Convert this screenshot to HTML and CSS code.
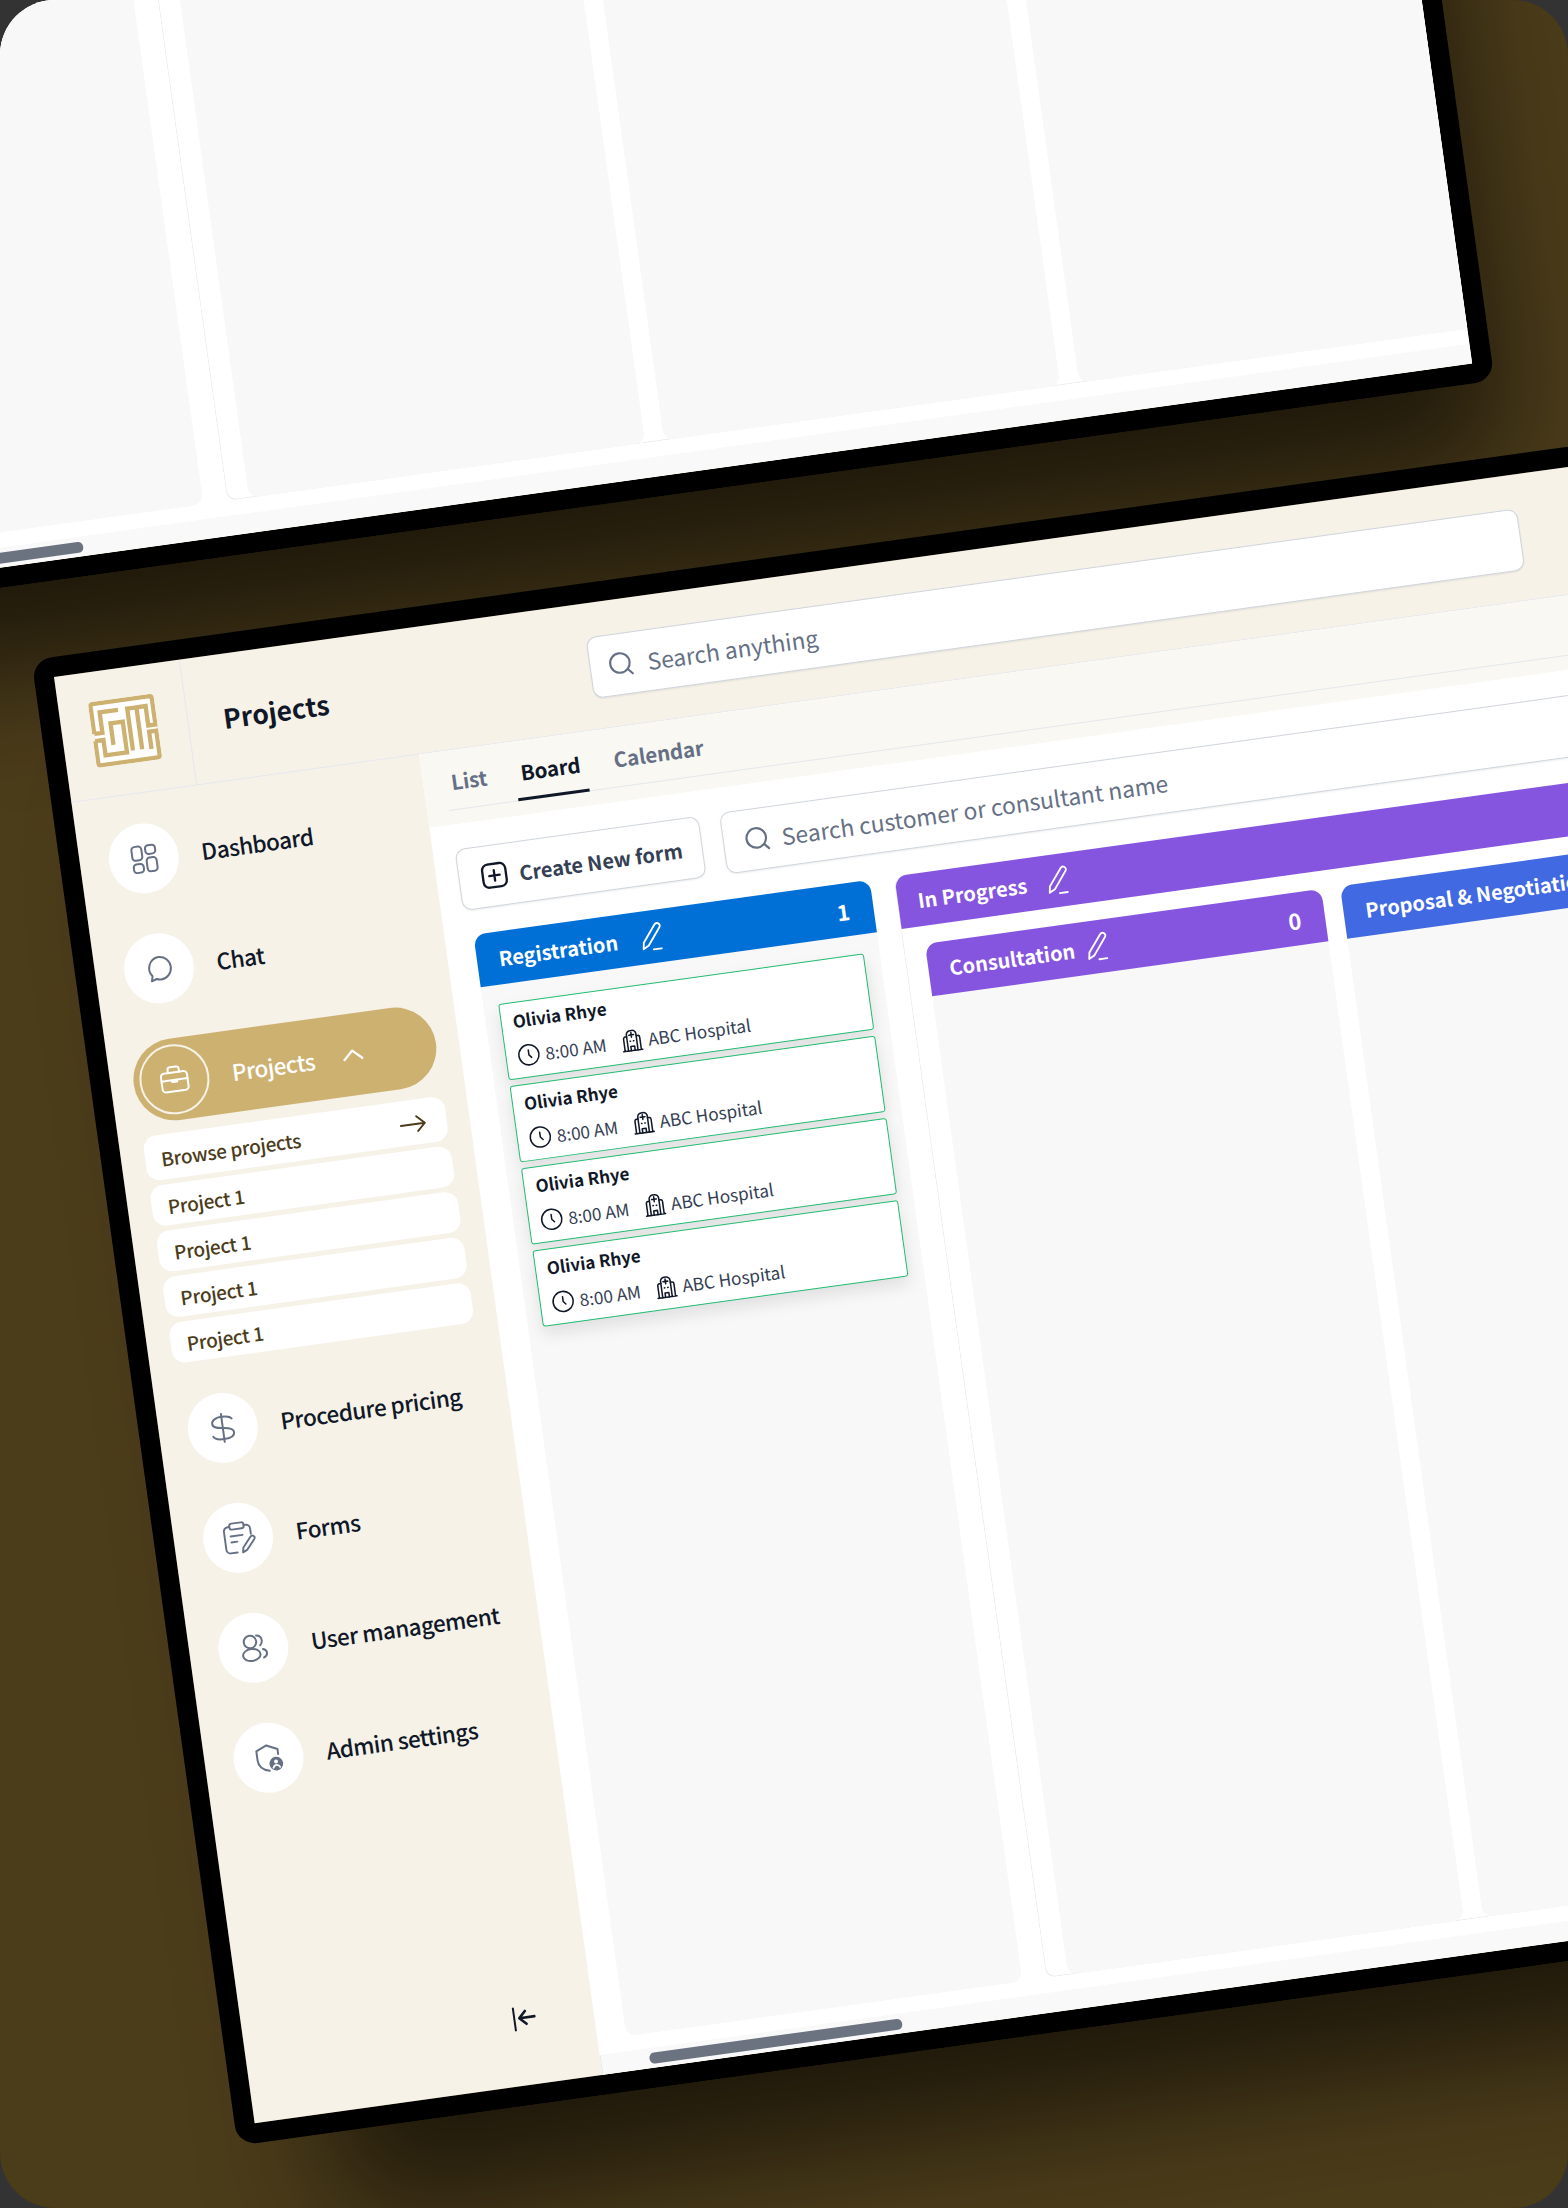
FILE: index.html
```html
<!DOCTYPE html>
<html lang="en">
<head>
  <meta charset="UTF-8">
  <meta name="viewport" content="width=device-width, initial-scale=1.0">
  <title>Projects</title>
  <link rel="stylesheet" href="styles.css">
</head>
<body>
  <svg class="defs" width="0" height="0">
    <symbol id="i-pencil" viewBox="0 0 24 24">
      <path d="M5 20l.8-4.800L15.500 2.800c.8-1 2-1.200 3-.5s1.200 2 .4 3L9.200 17.800z"/>
      <path d="M12.500 21.200h6"/>
    </symbol>
    <symbol id="i-search" viewBox="0 0 24 24">
      <circle cx="11.500" cy="11" r="9"/>
      <path d="M22 22l-4-4.500"/>
    </symbol>
    <symbol id="i-clock" viewBox="0 0 24 24">
      <circle cx="12" cy="12" r="10.500"/>
      <path d="M12 7v5l2.500 3"/>
    </symbol>
    <symbol id="i-hospital" viewBox="0 0 24 24">
      <path d="M3.500 22.500V9.500a2 2 0 0 1 2-2H7M20.500 22.500V9.500a2 2 0 0 0-2-2H17M2 22.500h20"/>
      <path d="M7 22.500V5.500a4 4 0 0 1 4-4h2a4 4 0 0 1 4 4v17"/>
      <path d="M12 3.500v5M9.500 6h5M10 22.500V18h4v4.500M10 12.500h.5M13.500 12.500h.5"/>
    </symbol>
  </svg>

  <div class="stage">
    <!-- upper tablet, only its lower board edge shows -->
    <div class="device device-top">
      <div class="screen">
        <div class="topbar"></div>
        <div class="sidebar"></div>
        <div class="main main-bare">
          <div class="board">
            <div class="column"></div>
            <div class="group">
              <div class="group-head"></div>
              <div class="group-cols">
                <div class="column"></div>
                <div class="column"></div>
                <div class="column"></div>
              </div>
            </div>
          </div>
          <div class="scrollbar"><span></span></div>
        </div>
      </div>
    </div>

    <!-- lower tablet -->
    <div class="device device-bottom">
      <div class="screen">
        <header class="topbar">
          <div class="logo-cell">
            <svg class="logo" viewBox="0 0 64 64">
              <rect x="2" y="2" width="60" height="60" rx="3" fill="#fff" stroke="none"/>
              <path d="M2 31V4a2 2 0 0 1 2-2h56a2 2 0 0 1 2 2v26h-7V11h-9v41M37 52V11h9"/>
              <path d="M2 31h8V11h18"/>
              <path d="M2 38h8v15h21V23H19v21"/>
              <path d="M2 38v22a2 2 0 0 0 2 2h56a2 2 0 0 0 2-2V36h-7v17"/>
            </svg>
          </div>
          <h1 class="page-title">Projects</h1>
          <div class="search search-top">
            <svg class="icon"><use href="#i-search"/></svg>
            <span>Search anything</span>
          </div>
        </header>

        <aside class="sidebar">
          <nav class="nav">
            <a class="nav-item">
              <span class="nav-circle">
                <svg class="icon" viewBox="0 0 24 24"><rect x="3" y="2" width="8" height="11" rx="2.500"/><rect x="14" y="2" width="8" height="7" rx="2.500"/><rect x="3" y="16" width="8" height="7" rx="2.500"/><rect x="14" y="12" width="8" height="11" rx="2.500"/></svg>
              </span>
              Dashboard
            </a>
            <a class="nav-item">
              <span class="nav-circle">
                <svg class="icon" viewBox="0 0 24 24"><path d="M12.500 3a9 9 0 0 1 0 18c-1.300 0-2.500-.3-3.600-.8L5 21.500l1-4A9 9 0 0 1 12.500 3z"/></svg>
              </span>
              Chat
            </a>
            <div class="nav-group">
              <a class="nav-pill">
                <span class="nav-circle nav-circle-line">
                  <svg class="icon" viewBox="0 0 24 24"><rect x="1.500" y="6.500" width="21" height="15" rx="2.500"/><path d="M7.500 6.500V4a2 2 0 0 1 2-2h5a2 2 0 0 1 2 2v2.500M1.500 12.500h21M10 12.500h4V14h-4z"/></svg>
                </span>
                <span class="nav-pill-label">Projects</span>
                <svg class="chevron" viewBox="0 0 22 12"><path d="M2 10.500L11 2l9 8.500"/></svg>
              </a>
              <ul class="subnav">
                <li class="subnav-browse">Browse projects
                  <svg class="arrow" viewBox="0 0 28 18"><path d="M1 9.500h25M18 1.500l8 8-8 7.500"/></svg>
                </li>
                <li>Project 1</li>
                <li>Project 1</li>
                <li>Project 1</li>
                <li>Project 1</li>
              </ul>
            </div>
            <a class="nav-item">
              <span class="nav-circle">
                <svg class="icon" viewBox="0 0 24 24"><path d="M12 .5v23M20 5.500C19 3.500 16 3 12 3 7.500 3 4 4.800 4 7.800s3.500 3.700 8 4.200c4.500.5 8.500 1.500 8.500 4.500S17 21 12 21c-4.500 0-7.600-.8-8.500-3"/></svg>
              </span>
              Procedure pricing
            </a>
            <a class="nav-item">
              <span class="nav-circle">
                <svg class="icon icon-lg" viewBox="0 0 30 30"><path d="M9 5H7.500A3.500 3.500 0 0 0 4 8.500v15A3.500 3.500 0 0 0 7.500 27H13M21 5h1.500A3.500 3.500 0 0 1 26 8.500V13"/><rect x="9" y="2.500" width="12" height="5" rx="2"/><path d="M9 13h10M9 18h5"/><path d="M17.500 27.500l.8-4 7-8c.9-1 2-1 2.800-.3s.8 1.800 0 2.800l-7 8z"/></svg>
              </span>
              Forms
            </a>
            <a class="nav-item">
              <span class="nav-circle">
                <svg class="icon" viewBox="0 0 24 24"><circle cx="10" cy="7" r="5"/><ellipse cx="10" cy="17.500" rx="7" ry="4.800"/><path d="M15.500 2.500c2.800.4 4 2.300 4 4.500 0 1.500-.6 2.800-1.800 3.700M19.500 14c1.800.6 2.800 1.800 2.800 3.300s-1 2.800-2.800 3.500"/></svg>
              </span>
              User management
            </a>
            <a class="nav-item">
              <span class="nav-circle">
                <svg class="icon" viewBox="0 0 24 24"><path d="M20 10V6L11.500 2 3 5.500V13c0 4.500 3.500 8 8.500 9.500"/><circle cx="17.500" cy="17.500" r="5.500" class="fill-gray"/><circle cx="17.500" cy="15.800" r="1.600" class="fill-white"/><path d="M14.800 20.500c.6-1.400 1.500-2 2.700-2s2.100.6 2.700 2" class="stroke-white"/></svg>
              </span>
              Admin settings
            </a>
          </nav>
          <button class="collapse" type="button" aria-label="Collapse">
            <svg viewBox="0 0 24 24"><path d="M2.500 .5v23"/><path class="collapse-arrow" d="M23 11.500H8M14 5l-6.500 6.500L14 18"/></svg>
          </button>
        </aside>

        <main class="main">
          <div class="tabs-wrap">
            <div class="tabs">
              <a class="tab">List</a>
              <a class="tab tab-active">Board</a>
              <a class="tab">Calendar</a>
            </div>
          </div>
          <div class="toolbar">
            <button class="btn-create" type="button">
              <svg class="icon" viewBox="0 0 24 24"><rect x="2" y="2" width="20" height="20" rx="5"/><path d="M12 7.500v9M7.500 12h9"/></svg>
              Create New form
            </button>
            <div class="search search-board">
              <svg class="icon"><use href="#i-search"/></svg>
              <span>Search customer or consultant name</span>
            </div>
          </div>
          <div class="board">
            <section class="column">
              <div class="column-head head-blue">
                <span>Registration</span>
                <svg class="pencil"><use href="#i-pencil"/></svg>
                <span class="count">1</span>
              </div>
              <div class="cards">
                <article class="card">
                  <div class="card-name">Olivia Rhye</div>
                  <div class="card-meta">
                    <svg class="meta-icon"><use href="#i-clock"/></svg><span>8:00 AM</span>
                    <svg class="meta-icon meta-icon-next"><use href="#i-hospital"/></svg><span>ABC Hospital</span>
                  </div>
                </article>
                <article class="card">
                  <div class="card-name">Olivia Rhye</div>
                  <div class="card-meta">
                    <svg class="meta-icon"><use href="#i-clock"/></svg><span>8:00 AM</span>
                    <svg class="meta-icon meta-icon-next"><use href="#i-hospital"/></svg><span>ABC Hospital</span>
                  </div>
                </article>
                <article class="card">
                  <div class="card-name">Olivia Rhye</div>
                  <div class="card-meta">
                    <svg class="meta-icon"><use href="#i-clock"/></svg><span>8:00 AM</span>
                    <svg class="meta-icon meta-icon-next"><use href="#i-hospital"/></svg><span>ABC Hospital</span>
                  </div>
                </article>
                <article class="card">
                  <div class="card-name">Olivia Rhye</div>
                  <div class="card-meta">
                    <svg class="meta-icon"><use href="#i-clock"/></svg><span>8:00 AM</span>
                    <svg class="meta-icon meta-icon-next"><use href="#i-hospital"/></svg><span>ABC Hospital</span>
                  </div>
                </article>
              </div>
            </section>
            <div class="group">
              <div class="group-head">
                <span>In Progress</span>
                <svg class="pencil"><use href="#i-pencil"/></svg>
              </div>
              <div class="group-cols">
                <section class="column">
                  <div class="column-head head-purple">
                    <span>Consultation</span>
                    <svg class="pencil pencil-near"><use href="#i-pencil"/></svg>
                    <span class="count">0</span>
                  </div>
                </section>
                <section class="column">
                  <div class="column-head head-royal">
                    <span>Proposal &amp; Negotiation</span>
                  </div>
                </section>
              </div>
            </div>
          </div>
          <div class="scrollbar"><span></span></div>
        </main>
      </div>
    </div>
  </div>
</body>
</html>
```

FILE: styles.css
```css
html, body {
  margin: 0;
  padding: 0;
  background: #333;
}
body {
  font-family: "Noto Sans CJK SC", "Noto Sans", sans-serif;
  color: #101828;
}
.defs {
  position: absolute;
}
.stage {
  position: relative;
  width: 1568px;
  height: 2208px;
  overflow: hidden;
  border-radius: 55px;
  background: #4b3c1a;
}

/* tablets lie tilted on the canvas, shadow falls down and to the right */
.device {
  position: absolute;
  width: 2056px;
  height: 1460px;
  border: 20px solid #000;
  border-radius: 20px;
  box-shadow: 50px 130px 120px -50px rgba(0, 0, 0, .6);
  transform-origin: 20px 20px;
  transform: rotate(-7.9deg);
}
.device-top {
  left: -785px;
  top: -820px;
}
.device-bottom {
  left: 34px;
  top: 657px;
}
.screen {
  display: grid;
  grid-template-columns: 351px 1fr;
  grid-template-rows: 127px 1333px;
  width: 2056px;
  height: 1460px;
  overflow: hidden;
  background: #f6f2e8;
}

/* top bar */
.topbar {
  grid-column: 1 / 3;
  display: flex;
  align-items: center;
  border-bottom: 1px solid #e6e8ee;
  box-sizing: border-box;
}
.logo-cell {
  flex: none;
  display: flex;
  align-items: center;
  justify-content: center;
  width: 127px;
  height: 126px;
  border-right: 1px solid #e6e8ee;
  box-sizing: border-box;
}
.logo {
  width: 66px;
  height: 66px;
  fill: none;
  stroke: #cdb171;
  stroke-width: 4.2;
}
.page-title {
  flex: none;
  width: 370px;
  margin: 3px 0 0 35px;
  font-size: 26.5px;
  font-weight: 700;
  line-height: 1;
}
.search {
  display: flex;
  align-items: center;
  box-sizing: border-box;
  background: #fff;
  border: 1px solid #d0d5dd;
  border-radius: 10px;
  box-shadow: 0 1px 2px rgba(16, 24, 40, .08);
  color: #667085;
  font-size: 22.8px;
}
.icon {
  flex: none;
  width: 30px;
  height: 30px;
  fill: none;
  stroke: #667085;
  stroke-width: 1.6;
  stroke-linecap: round;
  stroke-linejoin: round;
}
.icon-lg {
  width: 36px;
  height: 36px;
}
.search .icon {
  width: 26px;
  height: 26px;
  stroke-width: 2;
}
.search-top {
  width: 940px;
  height: 62px;
  margin-top: 4px;
  padding-left: 17px;
  gap: 14px;
}

/* sidebar */
.sidebar {
  display: flex;
  flex-direction: column;
  justify-content: space-between;
  padding: 30px 0 55px 29px;
  box-sizing: border-box;
}
.nav {
  display: flex;
  flex-direction: column;
  gap: 41px;
}
.nav-item {
  display: flex;
  align-items: center;
  gap: 23px;
  height: 70px;
  font-size: 22.5px;
  font-weight: 500;
  letter-spacing: -.5px;
}
.nav-circle {
  flex: none;
  display: flex;
  align-items: center;
  justify-content: center;
  width: 70px;
  height: 70px;
  box-sizing: border-box;
  border-radius: 50%;
  background: #fff;
}
.nav-circle-line {
  background: transparent;
  border: 2px solid #f6f2e8;
}
.nav-circle-line .icon {
  stroke: #fff;
}
.fill-gray {
  fill: #667085;
  stroke: none;
}
.fill-white {
  fill: #fff;
  stroke: none;
}
.stroke-white {
  stroke: #fff;
  stroke-width: 1.5;
}
.nav-group {
  margin: -5px 0 -6px -6px;
}
.nav-pill {
  display: flex;
  align-items: center;
  width: 305px;
  height: 82px;
  padding-left: 6px;
  box-sizing: border-box;
  border-radius: 41px;
  background: #cdb171;
  color: #fff;
}
.nav-pill-label {
  margin-left: 23px;
  font-size: 22.5px;
  font-weight: 500;
  letter-spacing: -.5px;
}
.chevron {
  width: 22px;
  height: 12px;
  margin-left: 28px;
  fill: none;
  stroke: #fff;
  stroke-width: 2.2;
  stroke-linecap: round;
  stroke-linejoin: round;
}
.subnav {
  display: flex;
  flex-direction: column;
  gap: 5px;
  width: 304px;
  margin: 12px 0 0 1px;
  padding: 0;
  list-style: none;
  color: #4b3c1a;
  font-size: 19px;
  font-weight: 500;
  letter-spacing: -.3px;
}
.subnav li {
  display: flex;
  align-items: center;
  justify-content: space-between;
  height: 41px;
  padding: 2px 20px 0 16px;
  box-sizing: border-box;
  border-radius: 13px;
  background: #fff;
}
.subnav .subnav-browse {
  height: 45px;
}
.arrow {
  width: 27px;
  height: 18px;
  fill: none;
  stroke: #4b3c1a;
  stroke-width: 2;
  stroke-linecap: round;
  stroke-linejoin: round;
}
.collapse {
  align-self: flex-end;
  width: 24px;
  height: 24px;
  margin-right: 58px;
  padding: 0;
  border: 0;
  background: none;
}
.collapse svg {
  display: block;
  fill: none;
  stroke: #101828;
  stroke-width: 2;
  stroke-linecap: round;
  stroke-linejoin: round;
}
.collapse-arrow {
  stroke-width: 2.6;
}

/* main area */
.main {
  display: flex;
  flex-direction: column;
  min-width: 0;
  background: #fff;
  overflow: hidden;
}
.main-bare {
  padding-top: 186px;
}
.tabs-wrap {
  flex: none;
  height: 74px;
  padding-left: 22px;
  box-sizing: border-box;
  background: #f9f8f3;
}
.tabs {
  display: flex;
  gap: 22px;
  height: 60px;
  box-sizing: border-box;
  border-bottom: 1px solid #e4e7ec;
}
.tab {
  height: 60px;
  padding: 16px 6px 0;
  box-sizing: border-box;
  color: #667085;
  font-size: 20.5px;
  font-weight: 700;
  letter-spacing: -.1px;
}
.tab-active {
  color: #101828;
  border-bottom: 3px solid #101828;
}
.toolbar {
  flex: none;
  display: flex;
  gap: 21px;
  height: 62px;
  margin: 25px 0 25px 22px;
}
.btn-create {
  flex: none;
  display: flex;
  align-items: center;
  gap: 11px;
  width: 246px;
  height: 62px;
  padding: 0 0 0 21px;
  box-sizing: border-box;
  background: #fff;
  border: 1px solid #d0d5dd;
  border-radius: 10px;
  box-shadow: 0 1px 2px rgba(16, 24, 40, .08);
  font-family: inherit;
  font-size: 20px;
  font-weight: 700;
  color: #344054;
  white-space: nowrap;
}
.btn-create .icon {
  width: 28px;
  height: 28px;
  stroke: #101828;
  stroke-width: 2;
}
.search-board {
  flex: 1;
  padding-left: 20px;
  gap: 12px;
}

/* board */
.board {
  flex: none;
  display: flex;
  gap: 24px;
  height: 1112px;
  margin-left: 29px;
}
.column {
  flex: none;
  display: flex;
  flex-direction: column;
  width: 400px;
  border-radius: 12px 12px 10px 10px;
  background: #f8f8f8;
}
.column-head {
  flex: none;
  display: flex;
  align-items: center;
  gap: 18px;
  height: 53px;
  padding: 0 24px 0 22px;
  box-sizing: border-box;
  border-radius: 12px 12px 0 0;
  color: #fff;
  font-size: 20px;
  font-weight: 700;
  white-space: nowrap;
}
.head-blue {
  background: #006fd6;
}
.head-purple {
  background: #8655e0;
  padding-left: 21px;
}
.head-royal {
  background: #4169e1;
}
.pencil {
  flex: none;
  width: 32px;
  height: 32px;
  fill: none;
  stroke: #fff;
  stroke-width: 1.4;
  stroke-linecap: round;
  stroke-linejoin: round;
}
.pencil-near {
  margin-left: -12px;
}
.count {
  margin-left: auto;
  font-size: 22px;
}
.cards {
  display: flex;
  flex-direction: column;
  gap: 6px;
  padding: 19px 16px 0 15px;
}
.card {
  height: 77px;
  padding: 6px 11px 0;
  box-sizing: border-box;
  background: #fff;
  border: 1.8px solid #22bb70;
  border-radius: 3px;
  box-shadow: 0 8px 16px rgba(16, 24, 40, .1);
}
.card-name {
  font-size: 17px;
  font-weight: 700;
  line-height: 24px;
}
.card-meta {
  display: flex;
  align-items: center;
  gap: 5px;
  margin-top: 12px;
  color: #344054;
  font-size: 17.2px;
  line-height: 20px;
}
.meta-icon {
  flex: none;
  width: 23px;
  height: 23px;
  fill: none;
  stroke: #101828;
  stroke-width: 1.6;
  stroke-linecap: round;
  stroke-linejoin: round;
}
.meta-icon-next {
  margin-left: 9px;
}
.group {
  flex: none;
  width: 1400px;
  box-sizing: border-box;
  background: #fff;
  border: 1px solid #ececec;
  border-top: 0;
  border-radius: 12px 0 0 10px;
}
.group-head {
  display: flex;
  align-items: center;
  gap: 15px;
  height: 53px;
  padding-left: 20px;
  box-sizing: border-box;
  border-radius: 12px 0 0 0;
  background: #8655e0;
  color: #fff;
  font-size: 20px;
  font-weight: 700;
}
.group-cols {
  display: flex;
  gap: 19px;
  height: 1041px;
  margin: 18px 0 0 21px;
}
.scrollbar {
  flex: none;
  height: 20px;
  margin-top: 15px;
  padding: 5px 0 0 48px;
  box-sizing: border-box;
  background: #f9f9f9;
  border-left: 1px solid #e4e7ec;
}
.scrollbar span {
  display: block;
  width: 255px;
  height: 11px;
  border-radius: 5px;
  background: #6b7280;
}
```
